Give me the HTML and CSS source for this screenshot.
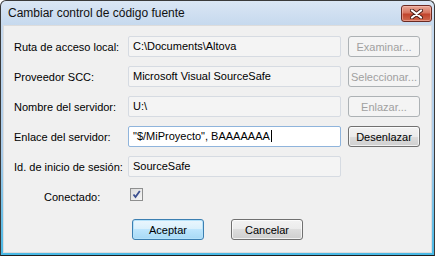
FILE: index.html
```html
<!DOCTYPE html>
<html lang="es">
<head>
    <meta charset="UTF-8">
    <link rel="stylesheet" href="styles.css">
    <title>Cambiar control de código fuente</title>
</head>
<body>

    <div class="window">
        <div class="titlebar">
            <span class="title">Cambiar control de código fuente</span>
            <button class="close-btn" aria-label="Cerrar">
                <svg width="13" height="10" viewBox="0 0 13 10">
                    <path d="M2 1.5 L11 8.5 M11 1.5 L2 8.5" stroke="#4a1d16" stroke-width="4" stroke-linecap="round"/>
                    <path d="M2 1.5 L11 8.5 M11 1.5 L2 8.5" stroke="#ffffff" stroke-width="2.2" stroke-linecap="round"/>
                </svg>
            </button>
        </div>

        <div class="client">
            <div class="form">
                <label class="lbl">Ruta de acceso local:</label>
                <div class="field">C:\Documents\Altova</div>
                <button class="btn" disabled>Examinar...</button>

                <label class="lbl">Proveedor SCC:</label>
                <div class="field">Microsoft Visual SourceSafe</div>
                <button class="btn" disabled>Seleccionar...</button>

                <label class="lbl">Nombre del servidor:</label>
                <div class="field">U:\</div>
                <button class="btn" disabled>Enlazar...</button>

                <label class="lbl">Enlace del servidor:</label>
                <div class="field active"><span class="caret">"$/MiProyecto", BAAAAAAA</span></div>
                <button class="btn">Desenlazar</button>

                <label class="lbl">Id. de inicio de sesión:</label>
                <div class="field">SourceSafe</div>
                <span></span>

                <label class="lbl check-lbl">Conectado:</label>
                <div class="check-cell">
                    <span class="checkbox">
                        <svg width="9" height="9" viewBox="0 0 9 9">
                            <path d="M1.5 4.5 L3.5 7 L7.8 1" fill="none" stroke="#3b4f8f" stroke-width="1.8"/>
                        </svg>
                    </span>
                </div>
                <span></span>
            </div>

            <div class="actions">
                <button class="btn default">Aceptar</button>
                <button class="btn">Cancelar</button>
            </div>
        </div>
    </div>

</body>
</html>
```

FILE: styles.css
```css
body {
    margin: 0;
    padding: 0;
    font-family: "Liberation Sans", Arial, sans-serif;
    background-color: #ffffff;
}

.window {
    width: 435px;
    height: 256px;
    box-sizing: border-box;
    border: 1px solid #3a3a3a;
    border-bottom-color: #1e1e1e;
    border-radius: 6px 6px 0 0;
    background: linear-gradient(to bottom, #dae6f4 0, #c6d9ee 24px, #a9cbe9 60%, #48b8e5 100%);
    display: flex;
    flex-direction: column;
}

.titlebar {
    height: 23px;
    display: flex;
    align-items: center;
    justify-content: space-between;
    padding: 0 2px 0 7px;
}

.title {
    font-size: 12px;
    color: #111;
    margin-top: 1px;
}

.close-btn {
    width: 31px;
    height: 17px;
    margin-top: 2px;
    padding: 0;
    border: 1px solid #6b2a22;
    border-radius: 3px;
    background: linear-gradient(to bottom, #e8a898 0, #d7755f 45%, #c1442c 55%, #cf6a4f 100%);
    box-shadow: inset 0 0 0 1px rgba(255, 200, 190, 0.5);
    display: flex;
    align-items: center;
    justify-content: center;
}

.client {
    flex: 1;
    margin: 1px 2px 2px 2px;
    background-color: #f0f0f0;
    border: 1px solid #dcdcdc;
    padding: 10px 0 0 10px;
}

.form {
    display: grid;
    grid-template-columns: 107px 213px 72px;
    grid-auto-rows: 21px;
    column-gap: 7px;
    row-gap: 9px;
    align-items: center;
}

.lbl {
    font-size: 11px;
    color: #000;
    white-space: nowrap;
}

.check-lbl {
    padding-left: 30px;
}

.field {
    height: 21px;
    box-sizing: border-box;
    border: 1px solid #d6dbe2;
    border-radius: 2px;
    background-color: #f4f4f4;
    font-size: 11px;
    padding: 0 4px;
    line-height: 19px;
    white-space: nowrap;
    overflow: hidden;
}

.field.active {
    background-color: #ffffff;
    border-color: #8fb4dc;
}

.caret {
    border-right: 1px solid #000;
    padding-right: 1px;
}

.check-cell {
    padding-left: 2px;
    display: flex;
    align-items: center;
}

.checkbox {
    width: 13px;
    height: 13px;
    box-sizing: border-box;
    border: 1px solid #8e8f8f;
    background: linear-gradient(135deg, #dcdcdc, #f6f6f6);
    display: flex;
    align-items: center;
    justify-content: center;
    margin-top: -5px;
}

.btn {
    height: 21px;
    width: 72px;
    padding: 0;
    font-family: "Liberation Sans", Arial, sans-serif;
    font-size: 11px;
    color: #000;
    border: 1px solid #707070;
    border-radius: 3px;
    background: linear-gradient(to bottom, #f2f2f2 0, #ebebeb 50%, #dddddd 50%, #cfcfcf 100%);
    box-shadow: inset 0 0 0 1px rgba(255, 255, 255, 0.7);
}

.btn:disabled {
    color: #a0a0a0;
    border-color: #adb2b5;
    background: #f4f4f4;
    box-shadow: none;
}

.btn.default {
    border-color: #3c7fb1;
    background: linear-gradient(to bottom, #eaf6fd 0, #d9f0fc 50%, #bee6fd 50%, #a7d9f5 100%);
    box-shadow: inset 0 0 0 1px #b5e2fa;
}

.actions {
    display: flex;
    gap: 27px;
    padding-left: 118px;
    margin-top: 12px;
}
```
